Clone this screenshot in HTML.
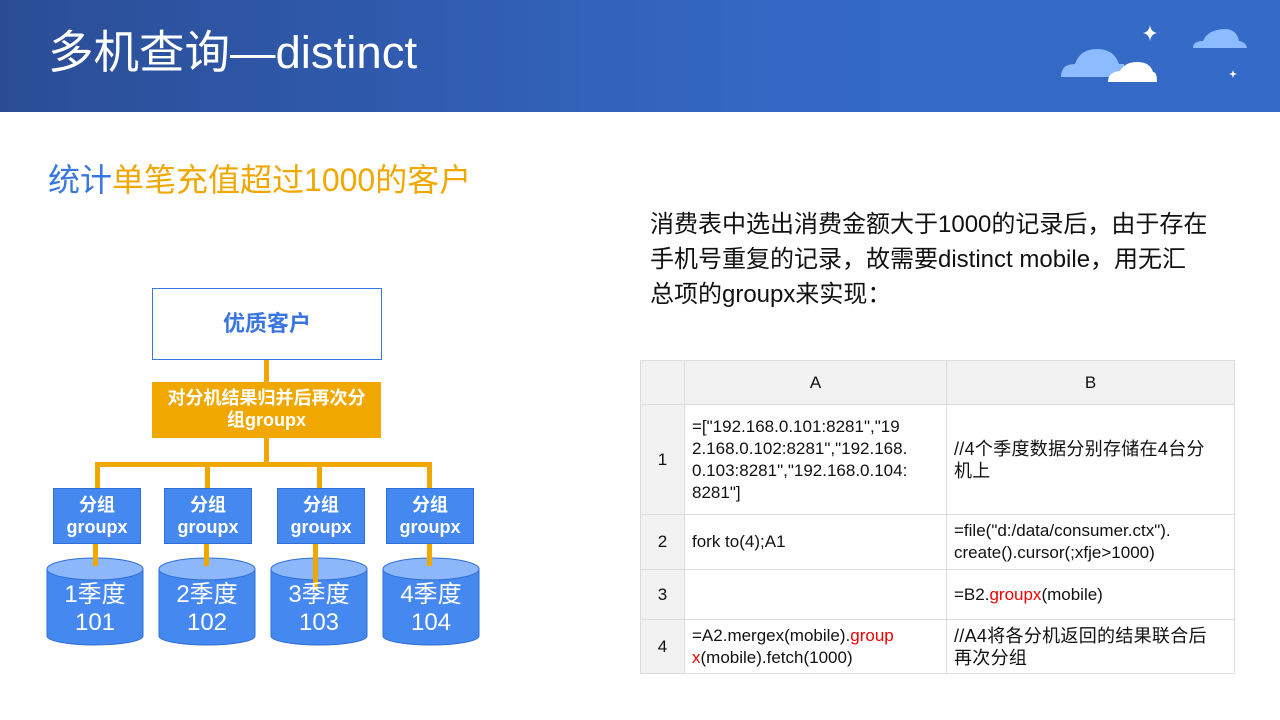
<!DOCTYPE html>
<html><head><meta charset="utf-8"><style>
*{margin:0;padding:0;box-sizing:border-box}
body{width:1280px;height:720px;overflow:hidden;background:#fff;position:relative;font-family:"Liberation Sans","Noto Sans CJK SC",sans-serif}
.hdr{position:absolute;left:0;top:0;width:1280px;height:112px;background:linear-gradient(90deg,#2b4d96 0%,#3468c4 60%,#356bc8 100%)}
.title{position:absolute;left:48px;top:25px;color:#fff;font-size:45.5px;line-height:56px}
.abs{position:absolute}
.box{position:absolute;background:#4589f0;border:1px solid #2f6fd6;color:#fff;font-weight:bold;font-size:18px;line-height:22px;text-align:center;padding-top:5px}
.ln{position:absolute;background:#f0a800}
.cyl{position:absolute;width:96px;height:88px}
.cyl .t{position:absolute;left:0;right:0;text-align:center;color:#fff;font-size:24px;line-height:28px}
table{position:absolute;left:640px;top:360px;border-collapse:collapse;font-size:17px;color:#111}
td{border:1px solid #dcdcdc;padding:0 7px;vertical-align:middle;line-height:22px}
.c{font-size:18px;letter-spacing:0.3px}
.r{color:#e00}
</style></head><body>
<div class="hdr"></div>
<div class="title">多机查询—distinct</div>
<svg class="abs" style="left:1040px;top:0" width="240" height="112">
<path d="M21 77 Q21 64 35 64 Q40 49 57 49 Q74 49 79 64 L84 64 L84 77 Z" fill="#8cbcff"/>
<path d="M68 82 Q68 72 80 71 Q85 62 97 62 Q110 62 113 72 Q117 72 117 82 Z" fill="#fff"/>
<path d="M153 48 Q153 41 163 41 Q168 29 186 29 Q197 30 199 41 Q206 42 207 48 Z" fill="#8cbcff"/>
<path d="M110 25 Q111 32 117 33 Q111 34 110 41 Q109 34 103 33 Q109 32 110 25Z" fill="#fff"/>
<path d="M193 70 L194 73 L197 74 L194 75 L193 78 L192 75 L189 74 L192 73Z" fill="#fff"/>
</svg>
<div class="abs" style="left:48px;top:159px;font-size:32px;line-height:42px;color:#f0a800"><span style="color:#3a76e0">统计</span>单笔充值超过1000的客户</div>
<div class="abs" style="left:650px;top:207px;font-size:24px;line-height:35px;color:#111;width:600px">消费表中选出消费金额大于1000的记录后，由于存在<br>手机号重复的记录，故需要distinct mobile，用无汇<br>总项的groupx来实现：</div>

<div class="abs" style="left:152px;top:288px;width:230px;height:72px;border:1px solid #3a76e0;color:#3a76e0;font-weight:bold;font-size:22px;line-height:70px;text-align:center">优质客户</div>
<div class="ln" style="left:264px;top:360px;width:5px;height:22px"></div>
<div class="abs" style="left:152px;top:382px;width:229px;height:56px;background:#f0a800;color:#fff;font-weight:bold;font-size:18px;line-height:22px;text-align:center;padding-top:5px">对分机结果归并后再次分<br>组groupx</div>
<div class="ln" style="left:264px;top:438px;width:5px;height:25px"></div>
<div class="ln" style="left:95px;top:462px;width:337px;height:5px"></div>
<div class="ln" style="left:95px;top:462px;width:5px;height:26px"></div>
<div class="ln" style="left:205px;top:462px;width:5px;height:26px"></div>
<div class="ln" style="left:317px;top:462px;width:5px;height:26px"></div>
<div class="ln" style="left:427px;top:462px;width:5px;height:26px"></div>
<div class="box" style="left:53px;top:488px;width:88px;height:56px">分组<br>groupx</div>
<div class="box" style="left:164px;top:488px;width:88px;height:56px">分组<br>groupx</div>
<div class="box" style="left:277px;top:488px;width:88px;height:56px">分组<br>groupx</div>
<div class="box" style="left:386px;top:488px;width:88px;height:56px">分组<br>groupx</div>

<svg class="abs" style="left:0;top:0" width="500" height="720">
<g stroke="#2f6fd6" stroke-width="1">
<g id="c"><path d="M47 569 L47 636 A48 9 0 0 0 143 636 L143 569 Z" fill="#4589f0"/><ellipse cx="95" cy="569" rx="48" ry="11" fill="#8cb8fb"/></g>
<use href="#c" x="112"/><use href="#c" x="224"/><use href="#c" x="336"/>
</g>
<g fill="#f0a800"><rect x="93" y="544" width="5" height="22"/><rect x="204" y="544" width="5" height="22"/><rect x="313" y="544" width="5" height="46"/><rect x="427" y="544" width="5" height="22"/></g>
</svg>
<div class="cyl" style="left:47px;top:560px"><div class="t" style="top:21px">1季度<br>101</div></div>
<div class="cyl" style="left:159px;top:560px"><div class="t" style="top:21px">2季度<br>102</div></div>
<div class="cyl" style="left:271px;top:560px"><div class="t" style="top:21px">3季度<br>103</div></div>
<div class="cyl" style="left:383px;top:560px"><div class="t" style="top:21px">4季度<br>104</div></div>

<table>
<tr style="height:44px;background:#f2f2f2"><td style="width:44px"></td><td style="width:262px;text-align:center">A</td><td style="width:288px;text-align:center">B</td></tr>
<tr style="height:110px"><td style="background:#f2f2f2;text-align:center">1</td><td>=["192.168.0.101:8281","19<br>2.168.0.102:8281","192.168.<br>0.103:8281","192.168.0.104:<br>8281"]</td><td class="c">//4个季度数据分别存储在4台分<br>机上</td></tr>
<tr style="height:55px"><td style="background:#f2f2f2;text-align:center">2</td><td>fork to(4);A1</td><td>=file("d:/data/consumer.ctx").<br>create().cursor(;xfje&gt;1000)</td></tr>
<tr style="height:50px"><td style="background:#f2f2f2;text-align:center">3</td><td></td><td>=B2.<span class="r">groupx</span>(mobile)</td></tr>
<tr style="height:54px"><td style="background:#f2f2f2;text-align:center">4</td><td>=A2.mergex(mobile).<span class="r">group<br>x</span>(mobile).fetch(1000)</td><td class="c">//A4将各分机返回的结果联合后<br>再次分组</td></tr>
</table>
</body></html>
